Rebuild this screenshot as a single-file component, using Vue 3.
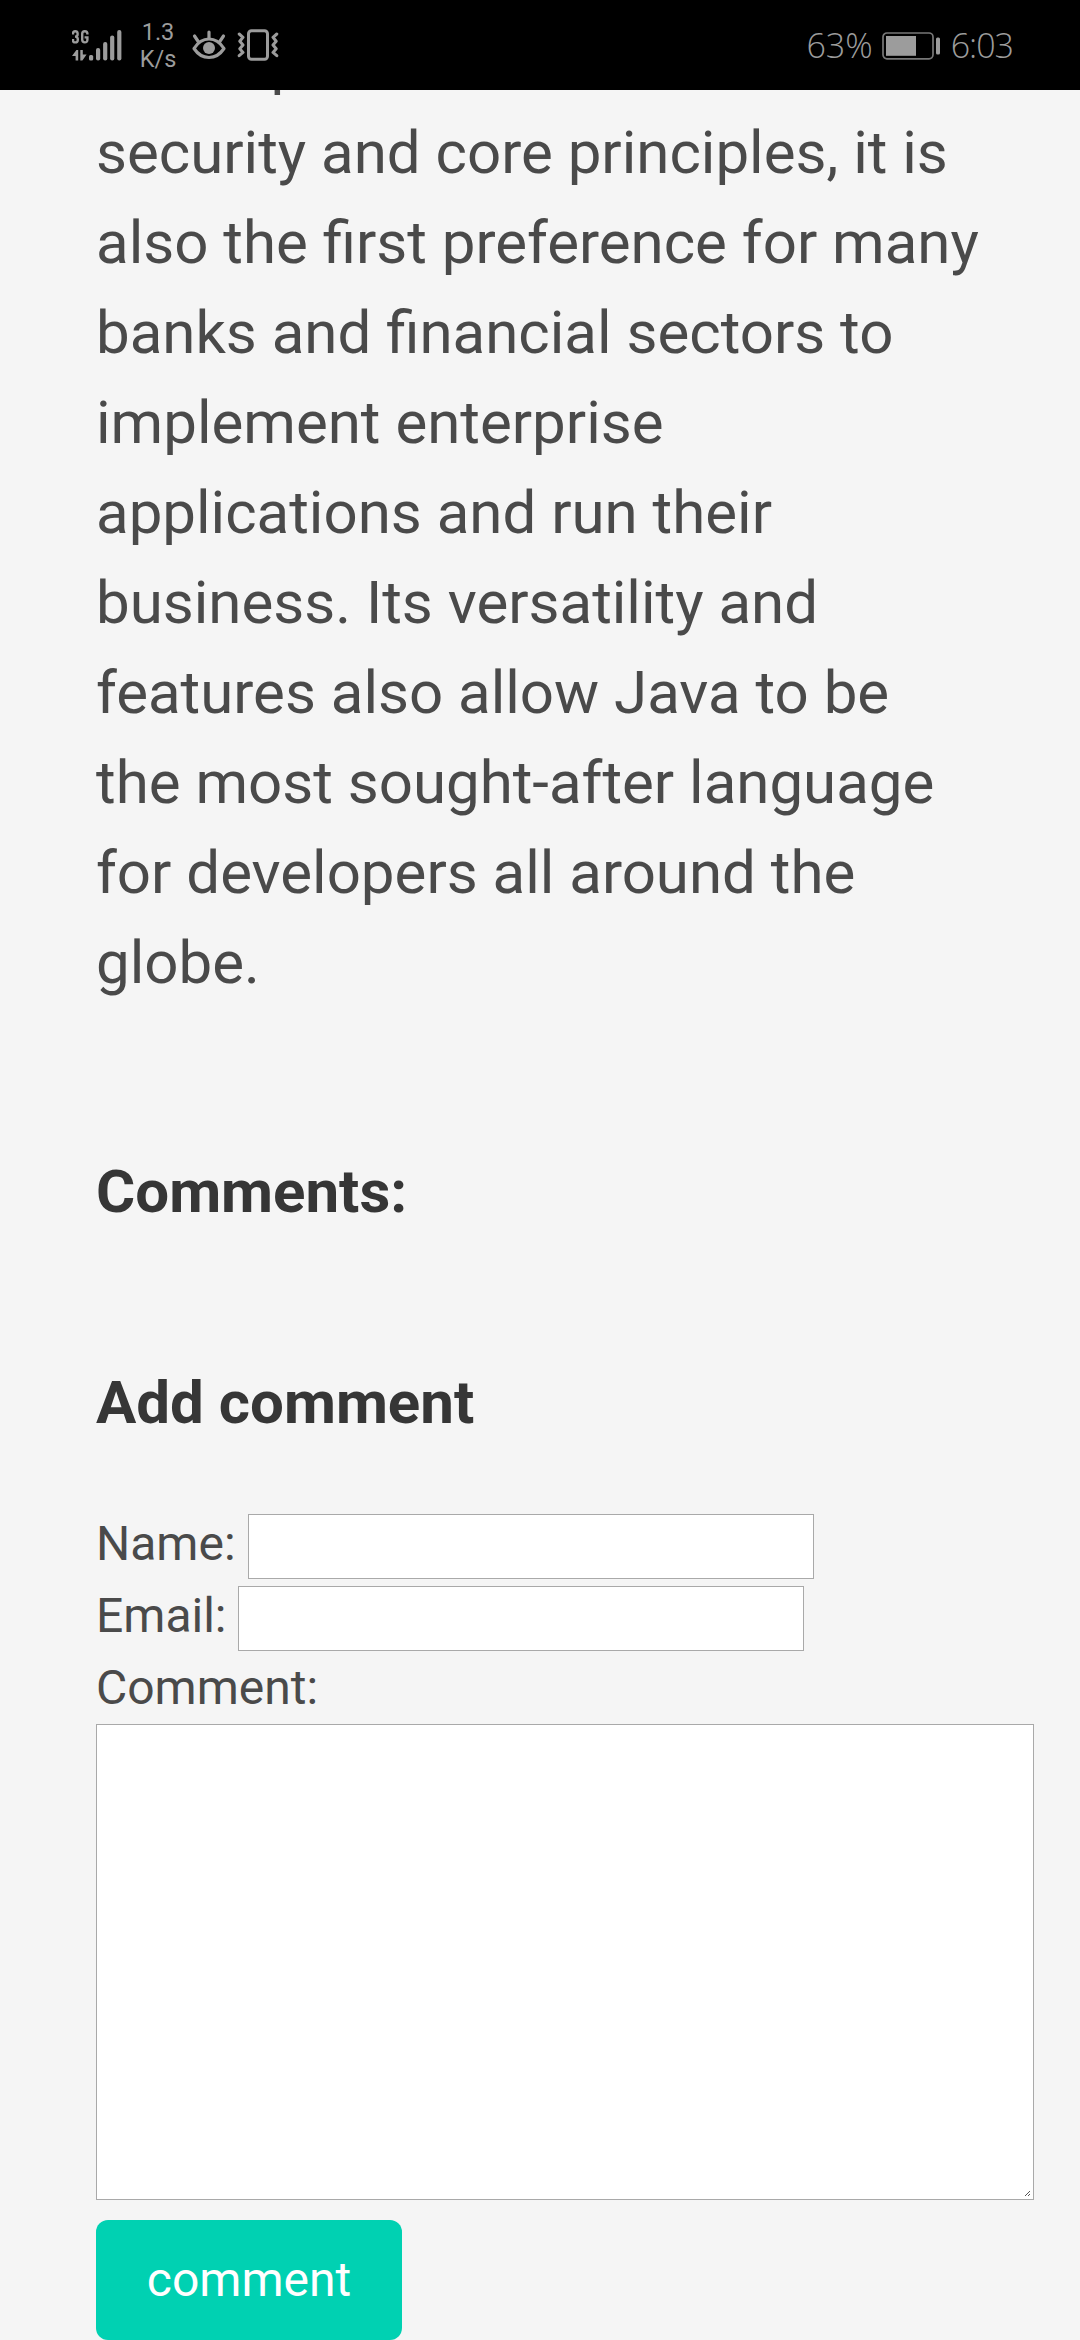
<script setup>
const lines = [
  'development',
  'security and core principles, it is',
  'also the first preference for many',
  'banks and financial sectors to',
  'implement enterprise',
  'applications and run their',
  'business. Its versatility and',
  'features also allow Java to be',
  'the most sought-after language',
  'for developers all around the',
  'globe.',
]
</script>

<template>
  <div class="screen">
    <header class="status">
      <svg class="signal" width="50" height="32" viewBox="0 0 50 32">
        <g fill="none" stroke="#9c9c9c" stroke-width="2.4">
          <path d="M1 4.5V3.5Q1 1.2 3.2 1.2T5.6 3.4V4.4Q5.6 6.6 3 6.6Q5.8 6.6 5.8 9.2V10Q5.8 12.4 3.3 12.4T1 10V9" />
          <path d="M15.4 4.6V3.8Q15.4 1.2 12.8 1.2T10.2 3.8V9.8Q10.2 12.4 12.8 12.4T15.4 9.8V7.4H12.6" />
        </g>
        <g fill="#9c9c9c">
          <path d="M0 26L4.4 20H6.2V30.4H3.6V26Z" />
          <path d="M8.3 20H10.8V24.4H14.6L10.4 30.4H8.3Z" />
          <rect x="17" y="25" width="4.2" height="5.5" rx="1.5" />
          <rect x="24" y="18" width="4.2" height="12.5" rx="2" />
          <rect x="31.1" y="12" width="4.2" height="18.5" rx="2" />
          <rect x="38.1" y="5.5" width="4.2" height="25" rx="2" />
          <rect x="45.2" y="0" width="4.2" height="30.5" rx="2" />
        </g>
      </svg>
      <div class="speed"><span>1.3</span><span>K/s</span></div>
      <svg class="eye" width="34" height="30" viewBox="0 0 34 30">
        <g fill="none" stroke="#9c9c9c" stroke-width="3.2" stroke-linecap="round">
          <path d="M2 18.5Q8 9 17 9T32 18.5Q26 27.5 17 27.5T2 18.5Z" stroke-linejoin="round" />
          <path d="M17 8V2M6.2 11.5L2.5 6M27.8 11.5L31.5 6" />
        </g>
        <circle cx="17" cy="18" r="6" fill="#9c9c9c" />
      </svg>
      <svg class="vibrate" width="42" height="32" viewBox="0 0 42 32">
        <g fill="none" stroke="#9c9c9c" stroke-width="3">
          <rect x="11.5" y="1.7" width="19" height="28.6" rx="3" />
          <path d="M2.2 5L6 8.3L2.8 12.3L6 16L2.8 19.8L6 23.4L2.2 26.7M39.8 5L36 8.3L39.2 12.3L36 16L39.2 19.8L36 23.4L39.8 26.7" stroke-linecap="round" stroke-linejoin="round" />
        </g>
      </svg>
      <span class="percent">63%</span>
      <svg class="battery" width="59" height="28" viewBox="0 0 59 28">
        <rect x="1" y="1" width="50" height="25.8" rx="4" fill="none" stroke="#777" stroke-width="1.7" />
        <rect x="4" y="4" width="30" height="19.8" fill="#9c9c9c" />
        <rect x="54" y="5.4" width="4" height="17" rx="1.5" fill="#9c9c9c" />
      </svg>
      <span class="clock">6:03</span>
    </header>

    <main class="page">
      <p class="article">
        <span v-for="line in lines" :key="line">{{ line }}</span>
      </p>
      <h2 class="title comments">Comments:</h2>
      <h2 class="title add">Add comment</h2>
      <form class="form" @submit.prevent>
        <label class="row">Name: <input type="text" /></label>
        <label class="row">Email: <input type="text" /></label>
        <label class="row" for="comment">Comment:</label>
        <div class="area">
          <textarea id="comment"></textarea>
          <svg class="grip" width="5" height="5" viewBox="0 0 5 5" shape-rendering="crispEdges">
            <path d="M0 4h1v1H0zM1 3h1v1H1zM2 2h1v1H2zM3 1h1v1H3zM4 0h1v1H4zM3 4h1v1H3zM4 3h1v1H4z" fill="#555" />
          </svg>
        </div>
        <button class="submit">comment</button>
      </form>
    </main>
  </div>
</template>

<style>
body {
  background: #f5f5f5;
}
</style>

<style scoped>
.screen {
  width: 1080px;
  height: 2340px;
  overflow: hidden;
  display: flex;
  flex-direction: column;
  background: #f5f5f5;
  color: #4a4a4a;
  font-family: Roboto, sans-serif;
}
.status {
  flex: none;
  box-sizing: border-box;
  height: 90px;
  padding: 0 67px 0 72px;
  display: flex;
  align-items: flex-start;
  background: #000;
  color: #9c9c9c;
}
.signal {
  margin-top: 30px;
}
.speed {
  width: 44px;
  margin: 19px 0 0 14px;
  display: flex;
  flex-direction: column;
  align-items: center;
  font-size: 23.5px;
  line-height: 27px;
}
.eye {
  margin: 30px 0 0 12px;
}
.vibrate {
  margin: 29px auto 0 11px;
}
.percent,
.clock {
  font: 300 34px/46px "Open Sans", sans-serif;
  margin-top: 22px;
}
.clock {
  letter-spacing: -1px;
}
.battery {
  margin: 32px 10px 0 9px;
}
.page {
  flex: 1;
  min-height: 0;
  overflow: hidden;
  padding-left: 96px;
}
.article {
  margin: -72px 0 0;
  font-size: 60px;
  line-height: 90px;
}
.article span {
  display: block;
  white-space: nowrap;
}
.title {
  margin: 0;
  height: 68px;
  color: #363636;
  font-size: 60px;
  font-weight: 700;
  line-height: 68px;
}
.comments {
  margin-top: 150px;
}
.add {
  margin-top: 143px;
}
.form {
  margin-top: 71px;
  display: flex;
  flex-direction: column;
  align-items: flex-start;
  font-size: 48px;
  line-height: 72px;
}
.row {
  height: 72px;
  display: flex;
  gap: 12px;
}
.row input {
  box-sizing: border-box;
  width: 566px;
  height: 65px;
  margin: 6px 0 0;
  padding: 0 6px;
  border: 1px solid #a9a9a9;
  border-radius: 0;
  background: #fff;
  font: inherit;
}
.area {
  position: relative;
  width: 938px;
  height: 476px;
}
.area textarea {
  display: block;
  box-sizing: border-box;
  width: 100%;
  height: 100%;
  margin: 0;
  border: 1px solid #a9a9a9;
  background: #fff;
  resize: none;
  font: inherit;
}
.grip {
  position: absolute;
  right: 4px;
  bottom: 4px;
}
.submit {
  width: 306px;
  height: 120px;
  margin-top: 20px;
  padding: 0;
  border: 0;
  border-radius: 12px;
  background: #00d1b2;
  color: #fff;
  font: 48px/120px Roboto, sans-serif;
}
</style>
